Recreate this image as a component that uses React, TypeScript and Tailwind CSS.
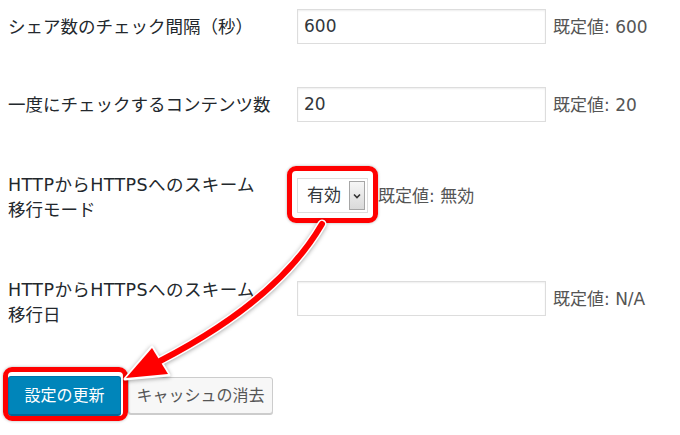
import type { ReactNode } from "react";

const font = "font-['DejaVu_Sans','Noto_Sans_CJK_JP',sans-serif]";

function Hint({ children, className = "" }: { children: ReactNode; className?: string }) {
  return <span className={`text-[17px] leading-[25px] text-[#555] ${className}`}>{children}</span>;
}

function TextBox({ value }: { value: string }) {
  return (
    <div className="flex h-[35px] w-[249px] items-center border border-[#ddd] bg-white pl-[6px] text-[17px] text-[#32373c] shadow-[inset_0_1px_2px_rgba(0,0,0,0.07)]">
      {value}
    </div>
  );
}

function Row({
  label,
  labelTop,
  fieldTop,
  className,
  children,
}: {
  label: ReactNode;
  labelTop: string;
  fieldTop: string;
  className: string;
  children: ReactNode;
}) {
  return (
    <div className={`flex items-start ${className}`}>
      <div className={`w-[289px] shrink-0 text-[17.5px] leading-[25px] text-[#23282d] ${labelTop}`}>{label}</div>
      <div className={`flex items-center ${fieldTop}`}>{children}</div>
    </div>
  );
}

function Arrow() {
  return (
    <svg
      className="pointer-events-none absolute left-0 top-0 drop-shadow-[0_1px_2px_rgba(0,0,0,0.35)]"
      width="680"
      height="435"
      viewBox="0 0 680 435"
    >
      <path d="M322 224 Q278 300 160 361" fill="none" stroke="#fff" strokeWidth="9" strokeLinecap="round" />
      <polygon points="125,379 152,347 169,375" fill="#fff" stroke="#fff" strokeWidth="3" strokeLinejoin="round" />
      <path d="M322 224 Q278 300 160 361" fill="none" stroke="#f00" strokeWidth="6" strokeLinecap="round" />
      <polygon points="126,378 152,348 168,374" fill="#f00" />
    </svg>
  );
}

export default function App() {
  return (
    <div className={`relative h-[435px] w-[680px] overflow-hidden bg-white ${font}`}>
      <div className="flex flex-col pl-2 pt-[9px]">
        <Row label="シェア数のチェック間隔（秒）" labelTop="mt-[6px]" fieldTop="" className="">
          <TextBox value="600" />
          <Hint className="ml-[7px] pt-[2px]">既定値: 600</Hint>
        </Row>

        <Row label="一度にチェックするコンテンツ数" labelTop="mt-[6px]" fieldTop="" className="mt-[43px]">
          <TextBox value="20" />
          <Hint className="ml-[7px] pt-[2px]">既定値: 20</Hint>
        </Row>

        <Row
          label={
            <>
              <span className="tracking-[0.4px]">HTTPからHTTPSへのスキーム</span>
              <br />
              移行モード
            </>
          }
          labelTop=""
          fieldTop="mt-[5px]"
          className="mt-[51px]"
        >
          <div className="relative">
            <div className="flex h-[35px] w-[71px] items-center border border-[#ddd] bg-white text-[17px] text-[#32373c]">
              <span className="pl-[9px]">有効</span>
              <span className="ml-auto mr-[2px] flex h-[29px] w-[16px] items-center justify-center border border-[#a6a6a6] bg-gradient-to-b from-[#f6f6f6] to-[#dadada]">
                <svg width="8" height="6" viewBox="0 0 8 6">
                  <path d="M1 1.5 L4 4.5 L7 1.5" fill="none" stroke="#333" strokeWidth="1.6" />
                </svg>
              </span>
            </div>
            <div className="pointer-events-none absolute left-[-10px] top-[-12px] h-[57px] w-[91px] rounded-[9px] border-[5px] border-[#f00] shadow-[0_0_3px_rgba(0,0,0,0.3)]" />
          </div>
          <Hint className="ml-[10px] pt-[2px]">既定値: 無効</Hint>
        </Row>

        <Row
          label={
            <>
              <span className="tracking-[0.4px]">HTTPからHTTPSへのスキーム</span>
              <br />
              移行日
            </>
          }
          labelTop=""
          fieldTop="mt-[3px]"
          className="mt-[55px]"
        >
          <TextBox value="" />
          <Hint className="ml-[7px] pt-[2px]">既定値: N/A</Hint>
        </Row>

        <div className="mt-[48px] flex items-start">
          <div className="relative">
            <button className="h-[39px] w-[113px] rounded-[3px] border border-[#0073aa] border-b-[#006799] bg-[#0085ba] text-[16px] text-white shadow-[0_1px_0_#006799]">
              設定の更新
            </button>
            <div className="pointer-events-none absolute left-[-5px] top-[-9px] h-[54px] w-[125px] rounded-[9px] border-[5px] border-[#f00] shadow-[0_0_3px_rgba(0,0,0,0.3)]" />
          </div>
          <button className="ml-[7px] mt-[1px] h-[37px] w-[145px] rounded-[3px] border border-[#ccc] bg-[#f7f7f7] text-[16px] text-[#555] shadow-[0_1px_0_#ccc]">
            キャッシュの消去
          </button>
        </div>
      </div>
      <Arrow />
    </div>
  );
}
